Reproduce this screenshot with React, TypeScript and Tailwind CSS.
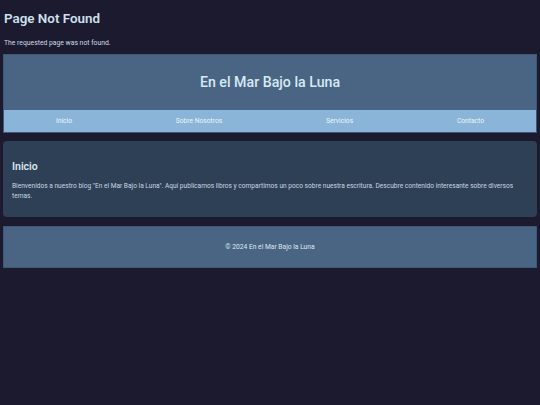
import React from "react";

const links = ["Inicio", "Sobre Nosotros", "Servicios", "Contacto"];

export default function App() {
  return (
    <div className="min-h-[405px] bg-[#1b1a2e] px-[3px] font-['Roboto',sans-serif] text-[#d5e3ee]">
      {/* Error heading */}
      <h1 className="pt-[9px] pl-[1px] text-[13.4px] font-semibold leading-[20px] text-[#cfe0ee]">Page Not Found</h1>
      <p className="mt-[9px] pl-[1px] text-[6.8px] leading-[10px] text-[#d0dbe6]">The requested page was not found.</p>

      {/* Header */}
      <header className="mt-[6px] border border-[#3f5875] bg-[#4a6583]">
        <div className="flex h-[55px] items-center justify-center">
          <span className="text-[14.2px] font-medium text-[#d6eaf5]">En el Mar Bajo la Luna</span>
        </div>
        <nav className="flex h-[22px] items-center justify-around bg-[#8ab4d8] text-[6.7px] text-[#eef4fa]">
          {links.map((l) => (
            <a key={l}>{l}</a>
          ))}
        </nav>
      </header>

      {/* Main section */}
      <section className="mt-[8px] h-[76px] rounded-[4px] bg-[#2e4055] px-[9px] pt-[19px]">
        <h2 className="text-[10.5px] font-semibold leading-[14px] text-[#d8e6f0]">Inicio</h2>
        <p className="mt-[7px] text-[6.6px] leading-[10px] text-[#c9d6e2]">
          Bienvenidos a nuestro blog "En el Mar Bajo la Luna". Aquí publicamos libros y compartimos un poco sobre nuestra escritura. Descubre contenido interesante sobre diversos temas.
        </p>
      </section>

      {/* Footer */}
      <footer className="mt-[9px] flex h-[42px] items-center justify-center border border-[#3f5875] bg-[#4a6583] text-[6.7px] text-[#dde7f0]">
        © 2024 En el Mar Bajo la Luna
      </footer>
    </div>
  );
}
